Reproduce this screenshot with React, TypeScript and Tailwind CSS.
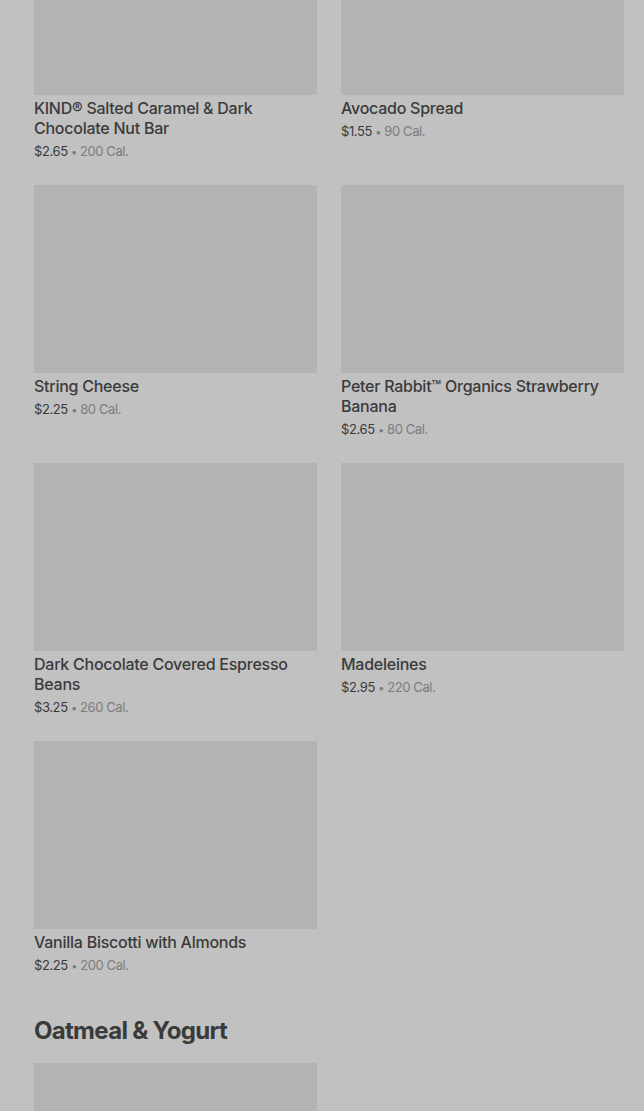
const items = [
  { name: "KIND® Salted Caramel & Dark Chocolate Nut Bar", price: "$2.65", cal: "200 Cal." },
  { name: "Avocado Spread", price: "$1.55", cal: "90 Cal." },
  { name: "String Cheese", price: "$2.25", cal: "80 Cal." },
  { name: "Peter Rabbit™ Organics Strawberry Banana", price: "$2.65", cal: "80 Cal." },
  { name: "Dark Chocolate Covered Espresso Beans", price: "$3.25", cal: "260 Cal." },
  { name: "Madeleines", price: "$2.95", cal: "220 Cal." },
  { name: "Vanilla Biscotti with Almonds", price: "$2.25", cal: "200 Cal." },
];

function Card({ name, price, cal }: { name: string; price: string; cal: string }) {
  return (
    <div className="flex flex-col">
      <div className="h-[188px] w-full bg-[#b3b3b3]" />
      <p className="mt-[3px] text-[16px] leading-[20px] font-medium tracking-[-0.25px] text-[#3b3b3b]">{name}</p>
      <p className="mt-[3px] h-[20px] text-[13px] leading-[20px] tracking-[-0.4px] text-[#3a3a3a]">
        {price} <span className="text-[11px] leading-none text-[#7c7c7c]">•</span> <span className="text-[#7c7c7c]">{cal}</span>
      </p>
    </div>
  );
}

export default function App() {
  return (
    <div className="min-h-[1111px] bg-[#c1c1c1] overflow-hidden pl-[34px] pr-[20px]" style={{ fontFamily: "Inter, 'Liberation Sans', sans-serif" }}>
      <div className="mt-[-93px] grid grid-cols-2 gap-x-[24px] gap-y-[24px]">
        {items.map((it) => (
          <Card key={it.name} {...it} />
        ))}
      </div>
      <h2 className="mt-[40px] text-[24px] leading-[32px] font-bold tracking-[-0.7px] text-[#3a3a3a]">Oatmeal &amp; Yogurt</h2>
      <div className="mt-[16px] grid grid-cols-2 gap-x-[24px]">
        <div className="h-[188px] bg-[#b3b3b3]" />
      </div>
    </div>
  );
}
